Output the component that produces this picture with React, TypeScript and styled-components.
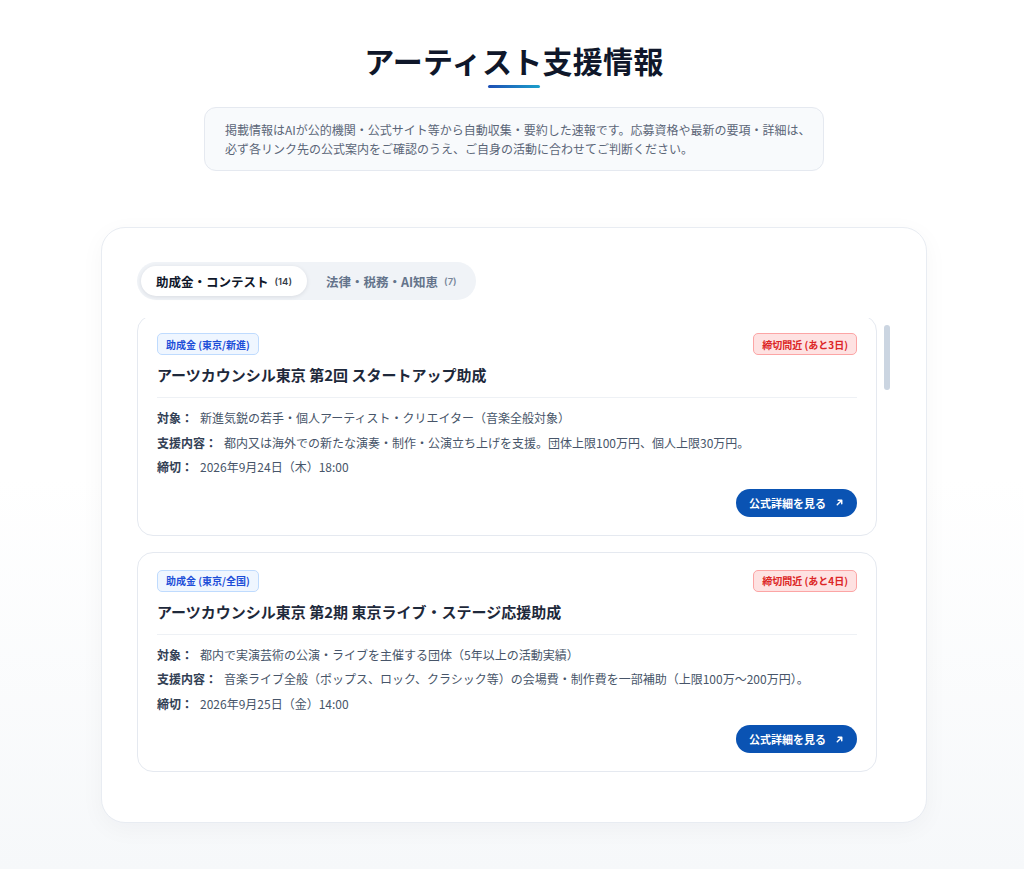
import { useEffect, useRef, useState } from "react";
import styled, { createGlobalStyle } from "styled-components";

const GlobalStyle = createGlobalStyle`
  html, body {
    margin: 0;
    padding: 0;
  }
  body {
    font-family: Inter, "Noto Sans CJK JP", "Noto Sans", sans-serif;
    color: #0f172a;
    background: linear-gradient(180deg, #ffffff 0%, #ffffff 55%, #f6f8fa 100%);
    min-height: 869px;
  }
`;

type Grant = {
  category: string;
  deadlineTag: string;
  title: string;
  target: string;
  support: string;
  deadline: string;
};

const grants: Grant[] = [
  {
    category: "助成金 (東京/新進)",
    deadlineTag: "締切間近 (あと3日)",
    title: "アーツカウンシル東京 第2回 スタートアップ助成",
    target: "新進気鋭の若手・個人アーティスト・クリエイター（音楽全般対象）",
    support: "都内又は海外での新たな演奏・制作・公演立ち上げを支援。団体上限100万円、個人上限30万円。",
    deadline: "2026年9月24日（木）18:00",
  },
  {
    category: "助成金 (東京/全国)",
    deadlineTag: "締切間近 (あと4日)",
    title: "アーツカウンシル東京 第2期 東京ライブ・ステージ応援助成",
    target: "都内で実演芸術の公演・ライブを主催する団体（5年以上の活動実績）",
    support: "音楽ライブ全般（ポップス、ロック、クラシック等）の会場費・制作費を一部補助（上限100万〜200万円）。",
    deadline: "2026年9月25日（金）14:00",
  },
  {
    category: "助成金 (全国)",
    deadlineTag: "締切まで (あと9日)",
    title: "文化庁 文化芸術創造拠点形成事業",
    target: "地域の文化芸術活動を担う団体・実行委員会",
    support: "地域発の音楽祭・芸術祭の企画運営費を補助。補助率1/2以内。",
    deadline: "2026年9月30日（水）17:00",
  },
  {
    category: "コンテスト (全国)",
    deadlineTag: "締切まで (あと12日)",
    title: "新人アーティスト オーディション 2026",
    target: "プロデビューを目指すソロ・バンド（ジャンル不問）",
    support: "グランプリには制作費100万円とレコーディング機会を提供。",
    deadline: "2026年10月3日（土）23:59",
  },
  {
    category: "助成金 (大阪)",
    deadlineTag: "締切まで (あと15日)",
    title: "大阪文化芸術創出事業 助成金",
    target: "大阪府内で活動するアーティスト・団体",
    support: "公演・展示・制作にかかる経費の一部を補助（上限50万円）。",
    deadline: "2026年10月6日（火）17:00",
  },
  {
    category: "助成金 (全国)",
    deadlineTag: "締切まで (あと18日)",
    title: "芸術文化振興基金 舞台芸術等の創造普及活動",
    target: "音楽・舞踊・演劇等の公演を行う団体",
    support: "公演の企画制作費を助成。助成対象経費の範囲内。",
    deadline: "2026年10月9日（金）17:00",
  },
  {
    category: "コンテスト (全国)",
    deadlineTag: "締切まで (あと20日)",
    title: "インディーズ作曲コンペティション",
    target: "作詞・作曲を行う個人クリエイター",
    support: "入賞作品は配信リリースおよび賞金30万円を授与。",
    deadline: "2026年10月11日（日）23:59",
  },
  {
    category: "助成金 (福岡)",
    deadlineTag: "締切まで (あと22日)",
    title: "福岡市 文化芸術活動支援補助金",
    target: "福岡市内で活動する文化芸術団体",
    support: "公演・ワークショップ開催費を補助（上限30万円）。",
    deadline: "2026年10月13日（火）17:00",
  },
  {
    category: "助成金 (全国)",
    deadlineTag: "締切まで (あと25日)",
    title: "アーティスト海外展開支援プログラム",
    target: "海外公演・ツアーを計画するアーティスト",
    support: "渡航費・現地制作費の一部を補助（上限150万円）。",
    deadline: "2026年10月16日（金）17:00",
  },
  {
    category: "コンテスト (東京)",
    deadlineTag: "締切まで (あと28日)",
    title: "東京ストリートミュージック アワード",
    target: "都内で路上・ライブハウス活動を行う演奏者",
    support: "受賞者には公式イベント出演権と賞金を授与。",
    deadline: "2026年10月19日（月）23:59",
  },
  {
    category: "助成金 (全国)",
    deadlineTag: "締切まで (あと30日)",
    title: "音楽制作デジタル化推進助成",
    target: "配信・デジタル制作に取り組む個人・団体",
    support: "録音機材・配信環境整備費を補助（上限40万円）。",
    deadline: "2026年10月21日（水）17:00",
  },
  {
    category: "助成金 (京都)",
    deadlineTag: "締切まで (あと33日)",
    title: "京都文化芸術活動応援補助金",
    target: "京都府内で活動するアーティスト",
    support: "公演・展示の開催費用を補助（上限20万円）。",
    deadline: "2026年10月24日（土）17:00",
  },
  {
    category: "コンテスト (全国)",
    deadlineTag: "締切まで (あと35日)",
    title: "全国ジャズコンテスト 2026",
    target: "ジャズを演奏するソロ・グループ",
    support: "入賞者には賞金と音楽祭出演の機会を提供。",
    deadline: "2026年10月26日（月）23:59",
  },
  {
    category: "助成金 (全国)",
    deadlineTag: "締切まで (あと40日)",
    title: "地域音楽フェスティバル開催支援",
    target: "地域で音楽イベントを主催する実行委員会",
    support: "会場設営費・広報費の一部を補助（上限80万円）。",
    deadline: "2026年10月31日（土）17:00",
  },
];

const Page = styled.div`
  display: flex;
  flex-direction: column;
  align-items: center;
  padding: 38px 0 47px 4px;
`;

const Title = styled.h1`
  margin: 0;
  font-family: "Noto Sans CJK JP", sans-serif;
  font-size: 30px;
  font-weight: 700;
  line-height: 44px;
  color: #0f172a;
  letter-spacing: 0.3px;
`;

const TitleBar = styled.div`
  width: 52px;
  height: 3px;
  border-radius: 2px;
  margin-top: 3px;
  background: linear-gradient(90deg, #1d4fb5 0%, #1b9fcb 100%);
`;

const Notice = styled.div`
  box-sizing: border-box;
  width: 620px;
  height: 64px;
  margin-top: 19px;
  padding: 12px 20px;
  background: #f8fafc;
  border: 1px solid #e5e9f0;
  border-radius: 12px;
  font-family: "Noto Sans CJK JP", sans-serif;
  font-size: 12px;
  line-height: 19px;
  color: #5b6678;
  white-space: nowrap;
`;

const Panel = styled.section`
  box-sizing: border-box;
  width: 826px;
  margin-top: 56px;
  padding: 34px 35px 35px;
  background: #ffffff;
  border: 1px solid #e8ecf2;
  border-radius: 24px;
  box-shadow: 0 6px 24px rgba(15, 23, 42, 0.04);
`;

const Tabs = styled.div`
  display: inline-flex;
  padding: 4px;
  gap: 4px;
  background: #f0f3f7;
  border-radius: 999px;
`;

const Tab = styled.button<{ $active?: boolean }>`
  display: flex;
  align-items: center;
  gap: 6px;
  height: 30px;
  padding: 0 15px;
  border: none;
  border-radius: 999px;
  cursor: pointer;
  font-family: "Noto Sans CJK JP", sans-serif;
  font-size: 12.5px;
  font-weight: 700;
  color: ${(p) => (p.$active ? "#0f172a" : "#64748b")};
  background: ${(p) => (p.$active ? "#ffffff" : "transparent")};
  box-shadow: ${(p) => (p.$active ? "0 1px 4px rgba(15, 23, 42, 0.1)" : "none")};
`;

const Count = styled.span`
  font-family: Inter, sans-serif;
  font-size: 9.5px;
  font-weight: 600;
  opacity: 0.85;
`;

const ListFrame = styled.div`
  position: relative;
  margin-top: 18px;
`;

const List = styled.div`
  display: flex;
  flex-direction: column;
  gap: 16px;
  height: 469px;
  padding-right: 14px;
  overflow-y: auto;
  scrollbar-width: none;

  &::-webkit-scrollbar {
    display: none;
  }
`;

const ScrollThumb = styled.div`
  position: absolute;
  right: 1px;
  width: 6px;
  border-radius: 3px;
  background: #cbd5e1;
  pointer-events: none;
`;

const Card = styled.article`
  flex-shrink: 0;
  box-sizing: border-box;
  padding: 17px 19px 18px 19px;
  border: 1px solid #e5e9f0;
  border-radius: 16px;
  background: #ffffff;
`;

const CardHead = styled.div`
  display: flex;
  justify-content: space-between;
  align-items: center;
`;

const Badge = styled.span<{ $tone: "blue" | "red" }>`
  display: inline-flex;
  align-items: center;
  height: 22px;
  box-sizing: border-box;
  padding: 0 8px;
  border-radius: 5px;
  font-family: "Noto Sans CJK JP", sans-serif;
  font-size: 10px;
  font-weight: 700;
  color: ${(p) => (p.$tone === "blue" ? "#1d4ed8" : "#dc2626")};
  background: ${(p) => (p.$tone === "blue" ? "#eff6ff" : "#fee2e2")};
  border: 1px solid ${(p) => (p.$tone === "blue" ? "#bfdbfe" : "#fca5a5")};
`;

const CardTitle = styled.h2`
  margin: 0;
  padding: 9px 0 11px;
  border-bottom: 1px solid #eef1f5;
  font-family: "Noto Sans CJK JP", sans-serif;
  font-size: 15px;
  font-weight: 700;
  line-height: 22px;
  color: #1e293b;
`;

const Details = styled.dl`
  margin: 8px 0 0;
  display: flex;
  flex-direction: column;
`;

const DetailRow = styled.div`
  display: flex;
  gap: 7px;
  font-family: "Noto Sans CJK JP", sans-serif;
  font-size: 12px;
  line-height: 24.5px;
`;

const Label = styled.dt`
  font-weight: 700;
  color: #334155;
`;

const Value = styled.dd`
  margin: 0;
  color: #475569;
`;

const Actions = styled.div`
  display: flex;
  justify-content: flex-end;
  margin-top: 9px;
`;

const DetailButton = styled.a`
  display: inline-flex;
  align-items: center;
  gap: 9px;
  height: 28px;
  padding: 0 13px;
  border-radius: 999px;
  background: #0a53b3;
  color: #ffffff;
  text-decoration: none;
  font-family: "Noto Sans CJK JP", sans-serif;
  font-size: 11px;
  font-weight: 700;
  cursor: pointer;
`;

const ArrowIcon = () => (
  <svg width="9" height="9" viewBox="0 0 10 10" fill="none">
    <path d="M2.5 7.5L7.5 2.5M3.5 2.5h4v4" stroke="#ffffff" strokeWidth="1.6" strokeLinecap="round" strokeLinejoin="round" />
  </svg>
);

const GrantCard = ({ grant }: { grant: Grant }) => (
  <Card>
    <CardHead>
      <Badge $tone="blue">{grant.category}</Badge>
      <Badge $tone="red">{grant.deadlineTag}</Badge>
    </CardHead>
    <CardTitle>{grant.title}</CardTitle>
    <Details>
      <DetailRow>
        <Label>対象：</Label>
        <Value>{grant.target}</Value>
      </DetailRow>
      <DetailRow>
        <Label>支援内容：</Label>
        <Value>{grant.support}</Value>
      </DetailRow>
      <DetailRow>
        <Label>締切：</Label>
        <Value>{grant.deadline}</Value>
      </DetailRow>
    </Details>
    <Actions>
      <DetailButton>
        公式詳細を見る
        <ArrowIcon />
      </DetailButton>
    </Actions>
  </Card>
);

const TRACK_INSET = 7;

const App = () => {
  const [tab, setTab] = useState<"grant" | "law">("grant");
  const [thumb, setThumb] = useState({ top: TRACK_INSET, height: 60 });
  const listRef = useRef<HTMLDivElement>(null);

  const updateThumb = () => {
    const el = listRef.current;
    if (!el) return;
    const track = el.clientHeight - TRACK_INSET * 2;
    const height = Math.max(24, (track * el.clientHeight) / el.scrollHeight);
    const max = el.scrollHeight - el.clientHeight;
    const top = TRACK_INSET + (max > 0 ? ((track - height) * el.scrollTop) / max : 0);
    setThumb({ top, height });
  };

  useEffect(() => {
    if (listRef.current) listRef.current.scrollTop = 3;
    updateThumb();
  }, []);

  return (
    <>
      <GlobalStyle />
      <Page>
        <Title>アーティスト支援情報</Title>
        <TitleBar />
        <Notice>
          掲載情報はAIが公的機関・公式サイト等から自動収集・要約した速報です。応募資格や最新の要項・詳細は、
          <br />
          必ず各リンク先の公式案内をご確認のうえ、ご自身の活動に合わせてご判断ください。
        </Notice>
        <Panel>
          <Tabs>
            <Tab $active={tab === "grant"} onClick={() => setTab("grant")}>
              助成金・コンテスト <Count>(14)</Count>
            </Tab>
            <Tab $active={tab === "law"} onClick={() => setTab("law")}>
              法律・税務・AI知恵 <Count>(7)</Count>
            </Tab>
          </Tabs>
          <ListFrame>
            <List ref={listRef} onScroll={updateThumb}>
              {grants.map((g) => (
                <GrantCard key={g.title} grant={g} />
              ))}
            </List>
            <ScrollThumb style={{ top: thumb.top, height: thumb.height }} />
          </ListFrame>
        </Panel>
      </Page>
    </>
  );
};

export default App;
